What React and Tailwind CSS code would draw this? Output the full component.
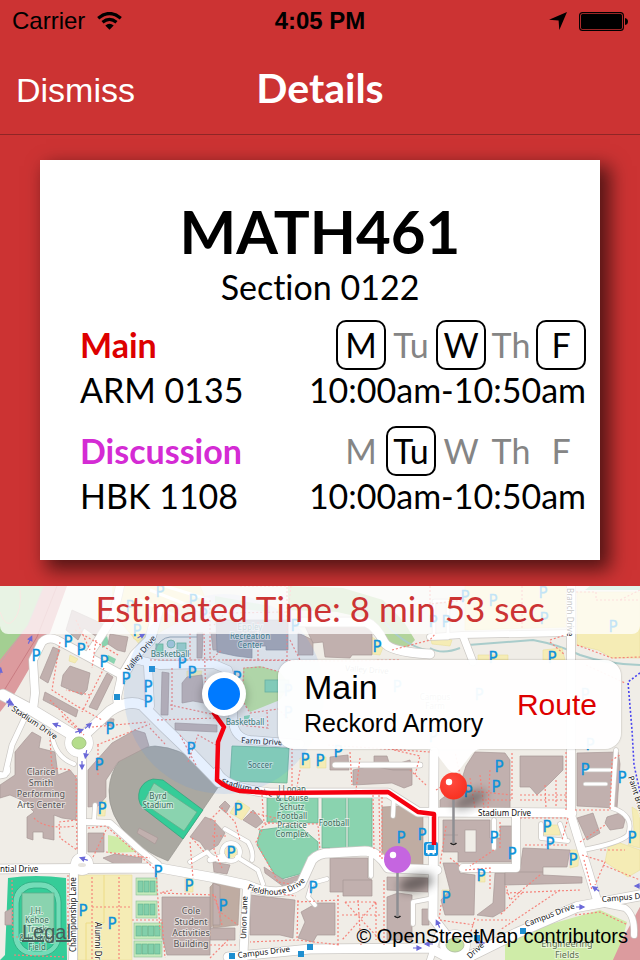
import React from "react";

const buildings = [
  "70,666 90,673 87,690 82,695 61,686 63,675",
  "53,647 60,650 48,683 40,678",
  "107,673 113,677 97,710 89,707",
  "45,692 78,710 76,717 43,700",
  "110,634 128,637 125,652 117,650 108,644",
  "72,610 103,624 97,637 84,628 78,640 66,630",
  "15,752 25,740 32,732 41,737 39,748 55,752 58,775 70,770 78,780 76,820 62,818 54,815 54,840 43,838 43,832 33,832 33,840 27,838 27,817 34,812 22,800 10,795 0,798 0,785 15,775",
  "162,672 169,673 168,715 161,715",
  "187,677 202,675 204,703 193,701 182,703 182,683",
  "175,723 217,725 217,732 175,730",
  "197,633 203,633 202,658 197,658",
  "211,633 222,633 222,650 213,650",
  "105,718 114,719 113,727 105,724",
  "298,633 313,640 313,655 298,655",
  "303,622 372,625 372,655 352,655 350,658 325,657 323,642 313,643",
  "88,770 112,743 135,730 145,733 149,746 118,762 106,780 106,797 98,806 88,807",
  "330,757 348,755 349,770 330,770",
  "374,756 387,756 390,766 410,760 412,770 374,770",
  "353,770 371,766 393,770 412,770 412,785 404,788 392,783 353,785",
  "330,858 368,858 368,878 372,880 372,896 343,896 343,892 330,892",
  "250,895 295,900 293,938 280,935 250,935",
  "317,903 335,903 335,935 317,935 313,942 298,938 305,922 301,912",
  "210,928 235,928 235,940 210,940",
  "387,897 398,893 412,895 412,940 387,940",
  "387,877 428,878 428,892 387,890",
  "190,837 205,817 213,820 225,833 218,845 207,852 200,842",
  "243,820 253,810 263,822 256,828",
  "219,807 225,801 230,806 226,813",
  "213,862 230,865 227,874 214,872",
  "264,867 284,880 303,874 307,878 284,887 265,873",
  "162,897 210,897 210,955 167,955 162,937",
  "88,833 104,833 104,852 88,852",
  "103,858 115,854 142,858 141,866 115,864",
  "213,883 220,886 220,925 213,925",
  "139,828 158,838 155,844 137,833",
  "443,820 490,820 490,838 500,838 500,826 514,826 514,862 458,862 458,852 443,852",
  "443,863 458,863 460,873 475,875 474,915 445,915 441,900 450,890",
  "495,873 505,873 505,910 493,917 477,915 493,903",
  "523,848 570,850 567,867 543,867 543,875 582,877 582,883 505,885 505,872 520,870",
  "577,818 593,813 600,833 587,840",
  "607,817 620,813 625,820 623,828 610,830 605,823",
  "520,756 563,756 563,770 550,783 537,795 530,787 520,787",
  "577,753 618,752 620,764 617,808 577,806",
  "475,752 505,753 510,760 510,808 440,808 440,800 460,785 466,766",
  "422,909 429,909 429,925 422,925",
  "5,912 12,908 12,925 5,925",
];

const sandLots = [
  "382,807 400,806 423,817 423,865 400,863 382,858",
  "213,883 240,885 238,925 213,928",
  "210,887 214,883 214,925 210,928",
];

const parking = [
  "113,586 200,586 208,605 160,632 140,645 112,612",
  "465,586 567,586 567,627 465,630",
  "577,592 640,592 640,658 612,658 598,650 577,645",
  "78,875 132,875 132,960 78,960",
  "238,800 250,808 242,820 230,813",
  "98,801 106,801 105,816 98,816",
  "185,878 193,878 193,892 185,892",
  "70,655 78,659 75,663 69,661",
  "187,671 202,671 200,678 187,677",
  "372,637 384,645 380,655 372,654",
  "492,782 504,782 504,793 492,793",
  "543,825 560,825 560,835 543,835",
  "442,890 451,890 451,905 442,905",
  "570,850 579,850 578,866 570,868",
  "632,807 640,812 640,848 628,845 634,830",
  "608,847 620,843 640,850 640,870 628,877 605,862",
  "478,655 508,655 508,660 478,660",
  "543,650 562,648 565,660 543,660",
  "430,636 452,640 450,646 432,644",
  "300,758 310,758 310,768 300,768",
  "317,757 326,757 326,768 317,768",
  "479,875 485,872 485,882 479,882",
  "137,630 146,634 138,641 133,638",
];

const roads = [
  ["M33,710 L35,693 L33,660 L42,642 Q48,636 57,640 L122,675 L117,697 L118,706", 8],
  ["M90,653 L113,617 L120,586", 8],
  ["M122,677 L135,655 L150,640 L158,610", 10],
  ["M138,660 L160,665 L214,664 L228,670 L234,690 L233,722 Q235,738 250,740 L300,744", 8],
  ["M148,665 L150,706", 8],
  ["M3,695 L35,712 L78,738", 11],
  ["M84,735 L110,711 Q128,699 142,705 L165,728 L190,752 L219,782", 10],
  ["M82,750 L82,863", 8],
  ["M74,866 L73,962", 8],
  ["M52,735 Q55,757 74,764", 4],
  ["M27,713 L12,745 L5,775 L0,776", 5],
  ["M0,869 L160,868 L210,877 L247,885 Q280,899 301,884 L312,860 Q318,853 330,853 L365,851 Q378,851 388,868 L437,870", 9],
  ["M247,886 L243,962", 8],
  ["M228,957 L310,949 L430,948 L452,960", 9],
  ["M450,966 L517,933 L577,907 L642,895", 10],
  ["M434,752 L433,918 L450,940", 9],
  ["M217,772 Q225,788 270,793 L388,793 L418,812 L572,813", 9],
  ["M516,813 L516,868 L463,868", 8],
  ["M571,586 L571,815 L597,900", 8],
  ["M616,750 L612,808 Q635,815 628,835 Q620,843 583,850", 4],
  ["M300,622 L366,622 Q376,626 384,642 Q389,652 430,654", 9],
  ["M430,637 L462,635 L571,633", 6],
  ["M463,636 L473,662", 7],
  ["M434,601 L434,638 L448,638 L448,601 Z", 3],
  ["M87,822 L110,823 L140,850 L158,864", 6],
  ["M95,805 L94,822", 4],
  ["M210,860 L223,856", 5],
  ["M237,857 L258,870 L263,884", 4],
  ["M225,829 L248,842 Q254,852 252,860", 4],
  ["M394,795 L393,816", 4],
  ["M371,853 L371,876", 4],
  ["M327,879 L312,883 L308,897 L315,905", 4],
  ["M434,898 L413,902 L413,924", 4],
  ["M494,820 L494,848", 4],
  ["M541,824 L541,838 L568,841", 4],
  ["M560,824 L565,838", 4],
  ["M600,903 L625,908 Q635,915 634,935", 6],
  ["M190,862 L207,852 Q215,862 225,860", 4],
  ["M585,770 L612,770 M585,784 L606,784", 3],
  ["M335,765 L420,765", 5],
  ["M0,774 Q10,776 8,768", 4],
  ["M430,960 L438,935", 6],
];

const footpaths = [
  "M76,620 L90,650 M75,630 L118,655 M96,640 L92,668",
  "M60,642 L52,690 L75,705 L102,720 M50,700 L80,730 M90,695 L66,690",
  "M104,668 L82,712 M62,716 L84,735",
  "M92,727 L148,722 M97,745 L150,724 M150,728 L165,744 M98,745 L98,775",
  "M50,740 L52,768 L72,770 M150,660 L215,660 L290,660",
  "M172,668 L172,712 M157,720 L216,718 M170,705 L216,715 M188,762 L198,735 L216,745 M180,735 L196,765",
  "M204,633 L206,705 M190,633 L190,660 M210,600 L210,660 L222,650",
  "M240,586 L287,586 L287,660 M225,660 L350,661 L400,660 M258,622 L258,660 M290,640 L300,660",
  "M291,586 L288,612 L225,613 L214,625",
  "M392,650 L430,640 L436,633 M430,586 L430,604 L465,600 M522,586 L522,630",
  "M576,592 L596,592 L596,600 L640,600 M577,645 L612,658 L640,657 M550,640 L565,635 M550,642 L565,655",
  "M280,672 L262,667 L244,668 L242,700 L250,713 L278,709 L290,720 M267,712 L268,728 L240,725",
  "M292,748 L292,795 M300,770 L296,792 M350,752 L352,785 M328,745 L430,752",
  "M360,758 L356,790 M394,750 L420,756 L415,775 M410,770 L426,785 M382,797 L382,860",
  "M88,828 L106,826 L156,870 L160,930 M93,857 L106,830 M106,852 L150,858",
  "M34,818 Q45,830 76,826 M76,775 L77,850 L60,838 L59,822 L76,820",
  "M68,875 L68,945 M92,877 L92,960 M119,877 L119,960 M92,907 L132,907 M132,920 L162,920 L165,958",
  "M12,880 L13,937 L25,937 M14,955 L66,957",
  "M160,893 L215,895 L222,925 M190,842 L193,878 M192,838 L205,853 M172,890 L160,893",
  "M210,820 L222,808 L235,822 L240,840 M212,836 L228,836 M215,820 L214,850 L222,868 M250,812 L275,818 L258,830",
  "M262,795 L264,823 L318,824 L320,850 M262,830 L256,842 L278,882 L290,884",
  "M213,895 L220,912 L238,925 M210,945 L238,945 M210,958 L228,940",
  "M298,900 L297,940 L340,945 M297,902 L340,900 M252,890 L296,896 M295,940 L250,942",
  "M338,895 L338,945 M345,902 L376,902 L376,940 M342,915 L380,915 M345,902 L380,940 M376,902 L342,940 M358,900 L361,945 M384,880 L384,945",
  "M373,795 L374,850 M379,795 L380,858",
  "M436,790 L460,775 L455,752 M455,795 L465,778 M470,778 L475,808 M480,775 L484,808 M490,770 L488,808 M462,790 L512,795",
  "M485,800 L512,800 L512,752 M520,795 L568,795 M520,800 L568,800 M545,785 L546,808 M556,780 L556,808 M566,752 L566,810",
  "M575,810 L610,810 L612,760 L620,755 M580,842 L605,825 M600,850 L625,850",
  "M520,818 L568,818 L562,840 M500,822 L500,850 M525,845 L568,845 M494,850 L470,866",
  "M506,893 L580,890 M540,875 L510,900 L506,886 M522,893 L500,915 M560,890 L500,930 M477,920 L510,920 M441,905 L439,920 L475,925 M475,918 L470,935",
  "M582,855 L605,862 L595,885 M603,865 L640,880 M584,860 L592,890 M575,915 L600,912 L628,925",
  "M446,826 L440,865 M450,858 L460,866 M465,870 L490,868 L490,890",
  "M640,590 L620,600 M586,665 L625,683",
];

const spots = [
  [68, 642], [81, 650], [36, 656], [104, 662], [126, 679], [148, 687], [148, 702], [182, 663], [192, 673],
  [110, 729], [191, 749], [99, 765], [160, 592], [193, 601], [137, 631], [130, 607], [203, 615], [295, 626],
  [377, 647], [237, 678], [305, 760], [320, 761], [338, 752], [288, 691], [397, 687], [288, 713], [465, 597],
  [493, 601], [543, 593], [544, 619], [613, 627], [433, 622], [446, 622], [493, 658], [552, 658], [499, 767],
  [585, 770], [479, 695], [585, 695], [590, 745], [433, 737], [102, 809], [158, 872], [189, 886], [83, 911],
  [112, 924], [238, 810], [231, 853], [223, 906], [313, 888], [401, 838], [422, 835], [468, 792], [496, 787],
  [494, 838], [512, 854], [481, 876], [446, 898], [547, 827], [550, 844], [573, 860], [632, 838], [622, 778],
];

const stops = [[117, 697], [152, 669], [310, 947], [301, 954], [232, 956], [523, 931], [477, 938]];

const arrows = [
  [30, 640, -65], [9, 703, -80], [0, 672, -80], [10, 703, 30], [57, 725, 200], [79, 731, -20], [88, 726, -40],
  [86, 754, 100], [84, 859, 200], [82, 765, 90], [580, 907, 0], [596, 889, 215], [639, 886, 180], [438, 924, -115],
  [429, 944, 180], [480, 943, 0], [417, 948, 0], [141, 636, -30],
];

const areaLabels = [
  [41, 775, 9, "#555", ["Clarice", "Smith", "Performing", "Arts Center"]],
  [158, 799, 8, "#3d6b5c", ["Byrd", "Stadium"]],
  [191, 914, 9, "#555", ["Cole", "Student", "Activities", "Building"]],
  [37, 914, 8, "#3d7560", ["J.H.", "Kehoe", "Track", "& Ludwig", "Field"]],
  [292, 792, 8, "#3d6b5c", ["J Logan", "& Louise", "Schutz", "Football", "Practice", "Complex"]],
  [334, 826, 8, "#3d6b5c", ["Football"]],
  [260, 768, 8, "#3d6b5c", ["Soccer"]],
  [245, 725, 8, "#3d7560", ["Basketball"]],
  [170, 657, 8, "#3d7560", ["Basketball"]],
  [250, 630, 8, "#3d7575", ["Eppley", "Recreation", "Center"]],
  [567, 947, 9, "#5e7252", ["Engineering", "Fields"]],
  [435, 700, 8, "#777", ["Campus", "Farm"]],
];

const roadLabels = [
  ["Stadium Drive", 11, 710, 34],
  ["Valley Drive", 129, 672, -51],
  ["Farm Drive", 241, 743, 3],
  ["Stadium Drive", 478, 816, 0],
  ["Stadium Drive", 221, 784, 14],
  ["ntial Drive", 0, 872, 0],
  ["Union Lane", 246, 939, -88],
  ["Championship Lane", 76, 952, -90],
  ["Alumni Drive", 95, 922, 90],
  ["Branch Drive", 567, 588, 90],
  ["Paint Branch", 628, 777, 72],
  ["Campus Drive", 238, 958, -7],
  ["Campus Drive", 526, 927, -21],
  ["Campus Dr", 602, 902, -5],
  ["Drive", 470, 959, -42],
  ["Valley Drive", 345, 671, 4],
];

const courts = [
  [136, 878, 21, 17, 3], [136, 901, 21, 17, 3], [134, 923, 28, 16, 4], [134, 941, 28, 16, 4],
];

function CampusMap() {
  return (
    <svg
      className="absolute inset-0 h-full w-full font-['Noto_Sans',sans-serif]"
      viewBox="0 586 640 374"
      preserveAspectRatio="xMidYMin slice"
      role="img"
      aria-label="Campus map with walking route"
    >
      <defs>
        <filter id="soft" x="-50%" y="-50%" width="200%" height="200%">
          <feGaussianBlur stdDeviation="5" />
        </filter>
        <radialGradient id="redPin" cx="0.4" cy="0.35" r="0.7">
          <stop offset="0" stopColor="#ff4a40" />
          <stop offset="1" stopColor="#f8301f" />
        </radialGradient>
        <path id="fieldhouse" d="M247,889 Q280,904 306,881" />
      </defs>
      <rect x="0" y="586" width="640" height="374" fill="#f0ede7" />

      {/* Parkland, highway and open ground */}
      <polygon points="0,586 48,586 30,625 0,668" fill="#a3cf92" />
      <path d="M0,612 Q6,630 14,620 T20,590" fill="none" stroke="#e9a08f" />
      <polygon points="44,586 67,586 50,633 15,693 0,712 0,660 28,625" fill="#dc9b9e" />
      <path d="M57,586 L37,637 L0,697" fill="none" stroke="#c97c82" />
      <path d="M44,586 L28,625 L0,663" fill="none" stroke="#bfaaa8" />
      <polygon points="288,586 343,588 383,600 404,622 415,640 408,647 397,648 386,640 373,620 337,612 288,610" fill="#b2d49b" />
      <path d="M215,596 L270,606 L270,612 L215,606Z" fill="#cfe5bd" />
      <path d="M380,616 Q400,645 430,651 M430,648 Q442,655 460,648 M468,645 L533,640 Q560,645 580,655 Q606,664 640,665" fill="none" stroke="#a9cccb" strokeWidth="2" />
      <path d="M590,586 L640,586 L640,590 L585,590Z" fill="#8ad3af" />
      <polygon points="505,941 530,930 600,910 627,922 617,960 505,960" fill="#cfeca8" />
      <polygon points="642,903 622,940 612,962 642,962" fill="#dc9b9e" />
      <polygon points="108,835 118,837 137,852 108,853" fill="#cfeca8" />

      {parking.map((p) => (
        <polygon key={p} points={p} fill="#f5ecb5" stroke="#eadf9a" strokeWidth="0.6" />
      ))}
      <path d="M104,875 V923 H86 V960" fill="none" stroke="#eddc86" />
      <path d="M150,590 L205,612 M140,600 L190,622 M165,586 L210,600" stroke="#fff" strokeWidth="3" />

      {/* Stadium bowl and sports fields */}
      <path d="M120,760 Q135,747 155,746 Q182,748 200,765 L219,786 L168,861 Q145,852 130,838 Q108,815 109,790 Q110,772 120,760Z" fill="#aaa8a1" stroke="#918f8a" strokeWidth="0.6" />
      <path d="M153,779 L163,780 L203,810 L183,839 L143,808 Q136,800 140,789 Q144,781 153,779Z" fill="#35cc98" stroke="#249c74" strokeWidth="0.6" />
      <polygon points="154,783 197,812 184,831 143,803" fill="#8ad3af" stroke="#5fae8c" strokeWidth="0.8" />
      <path d="M8,878 Q35,874 66,878 L67,960 L0,960 L5,955Z" fill="#35cc98" />
      <rect x="13" y="882" width="48" height="74" rx="20" fill="#74dcb8" stroke="#2faa80" strokeWidth="0.8" />
      <rect x="19" y="888" width="37" height="63" rx="15" fill="#35cc98" stroke="#2faa80" strokeWidth="0.8" />
      <rect x="22" y="893" width="32" height="48" fill="#8ad3af" stroke="#5fae8c" strokeWidth="0.8" />
      {courts.map(([x, y, w, h, n]) => (
        <g key={y}>
          <rect x={x} y={y} width={w} height={h} fill="#c5eabb" stroke="#8abf94" strokeWidth="0.6" />
          {Array.from({ length: n }, (_, i) => (
            <rect key={i} x={x + 2 + (i * (w - 3)) / n} y={y + 3} width={(w - 3) / n - 1} height={h - 6} fill="#82cfaa" stroke="#5fae8c" strokeWidth="0.6" />
          ))}
        </g>
      ))}
      <g fill="#8ad3af" stroke="#6db394" strokeWidth="0.8">
        <polygon points="232,746 289,748 287,783 230,781" />
        <polygon points="267,798 318,798 318,823 267,822" />
        <polygon points="322,797 346,797 346,848 322,848" />
        <polygon points="348,797 372,797 372,848 348,848" />
        <path d="M260,830 L298,825 L318,842 L318,853 L307,872 L278,880 L257,845Z" />
        <path d="M243,668 L260,666 L280,672 L290,685 L280,700 L250,712 L242,700Z" fill="#bfe09b" stroke="none" />
        <rect x="265" y="680" width="24" height="12" />
        <rect x="156" y="644" width="7" height="9" />
        <rect x="177" y="643" width="9" height="8" fill="#9fcfc4" />
        <circle cx="171" cy="644" r="4" fill="#a9c8d4" />
        <path d="M102,640 l5,-4 l2,8 l-7,4z M108,655 l8,4 l-2,5 l-7,-4z M244,716 l6,-1 l-1,4 l-5,1z" stroke="none" />
      </g>
      <path d="M155,656 V650 Q160,638 170,637 H197" fill="none" stroke="#9aa5ad" />

      {sandLots.map((p) => (
        <polygon key={p} points={p} fill="#bfaca2" stroke="#a8968e" strokeWidth="0.6" />
      ))}
      {buildings.map((p) => (
        <polygon key={p} points={p} fill="#c1b0ae" stroke="#a79896" strokeWidth="0.7" />
      ))}
      <polygon points="216,620 288,620 288,650 266,650 266,646 252,646 252,658 236,656 217,652" fill="#a8a5ac" stroke="#8f8f9a" strokeWidth="0.7" />
      <rect x="465" y="830" width="11" height="22" fill="#f0ede7" stroke="#a79896" strokeWidth="0.6" />
      <path d="M343,880 H372 M343,880 V892 M505,872 H543 M443,835 H458" stroke="#a79896" strokeWidth="0.7" />

      {/* Streets: casing below, surface above */}
      <g fill="none" strokeLinejoin="round" strokeLinecap="round">
        {roads.map(([d, w]) => (
          <path key={d} d={d} stroke="#cbc8c4" strokeWidth={w + 1.4} />
        ))}
        <circle cx="79" cy="743" r="10" stroke="#cbc8c4" strokeWidth="9" />
        <circle cx="455" cy="945" r="11" stroke="#cbc8c4" strokeWidth="9" />
        <circle cx="82" cy="864" r="7" stroke="#cbc8c4" strokeWidth="9" />
        <circle cx="231" cy="852" r="9" stroke="#cbc8c4" strokeWidth="5" />
        {roads.map(([d, w]) => (
          <path key={d} d={d} stroke="#fff" strokeWidth={w} />
        ))}
        <circle cx="79" cy="743" r="10" stroke="#fff" strokeWidth="8" />
        <circle cx="455" cy="945" r="11" stroke="#fff" strokeWidth="8" />
        <circle cx="82" cy="864" r="7" stroke="#fff" strokeWidth="8" />
        <circle cx="231" cy="852" r="9" stroke="#fff" strokeWidth="4" />
      </g>
      <ellipse cx="79" cy="743" rx="7" ry="6" fill="#b5dd8c" stroke="#a5c585" />
      <ellipse cx="455" cy="945" rx="9" ry="7" fill="#c5e3a0" stroke="#b5c5a5" />
      <ellipse cx="82" cy="865" rx="4" ry="2" fill="#e8e5df" />
      <circle cx="231" cy="852" r="6" fill="#f5ecb5" />

      <g fill="none" stroke="#f5837b" strokeWidth="1.2" strokeDasharray="2 2">
        {footpaths.map((d) => (
          <path key={d} d={d} />
        ))}
      </g>
      <path d="M640,673 L628,682 L632,730 L634,765 L640,792" fill="none" stroke="#4a45f0" strokeWidth="1.6" strokeDasharray="2 2" />

      {arrows.map(([x, y, a], i) => (
        <path key={i} transform={`translate(${x} ${y}) rotate(${a})`} d="M-4,0 H1 M0,-2 L4,0 L0,2Z" fill="#6a68d8" stroke="#6a68d8" strokeWidth="1.2" />
      ))}
      {stops.map(([x, y]) => (
        <rect key={x} x={x - 3} y={y - 3} width="6" height="6" fill="#1f8fd0" />
      ))}

      <g className="font-['DejaVu_Sans',sans-serif] text-[15px]" fill="#0d92da" stroke="#0d92da" strokeWidth="0.3" textAnchor="middle">
        {spots.map(([x, y]) => (
          <text key={`${x}-${y}`} x={x} y={y + 5}>P</text>
        ))}
      </g>

      {areaLabels.map(([x, y, size, color, lines], k) => (
        <g
          key={k}
          fill={color}
          stroke="#ffffff"
          strokeOpacity="0.5"
          strokeWidth="2"
          textAnchor="middle"
          className={size === 9 ? "text-[9px] [paint-order:stroke]" : "text-[8px] [paint-order:stroke]"}
        >
          {lines.map((t, i) => (
            <text key={t} x={x} y={y + i * (size === 9 ? 11 : 9)}>{t}</text>
          ))}
        </g>
      ))}
      <g className="text-[8px] [paint-order:stroke]" fill="#111" stroke="#fff" strokeWidth="1.5" strokeOpacity="0.8">
        {roadLabels.map(([t, x, y, a]) => (
          <text key={`${t}${x}`} transform={`translate(${x} ${y}) rotate(${a})`}>{t}</text>
        ))}
        <text>
          <textPath href="#fieldhouse">Fieldhouse Drive</textPath>
        </text>
      </g>

      {/* Bus stop */}
      <rect x="424" y="842" width="14" height="14" rx="2" fill="#1493dc" />
      <rect x="427" y="844" width="8" height="7" rx="1.5" fill="#1493dc" stroke="#fff" strokeWidth="1.2" />
      <path d="M426,850 h10 v3 h-1.5 v1.5 h-2 v-1.500 h-3 v1.500 h-2 v-1.500 h-1.500z" fill="#fff" />

      {/* Location accuracy, route and current position */}
      <circle cx="224" cy="694" r="100" fill="#4d94f5" fillOpacity="0.14" />
      <path d="M213,712 L224,727 L218,742 L217,780 Q226,788 240,791 L270,793 L388,792 L418,812 L434,814 L434,845" fill="none" stroke="#f5000f" strokeWidth="4.500" strokeLinejoin="round" />
      <circle cx="224" cy="696" r="23" fill="#000" fillOpacity="0.25" filter="url(#soft)" />
      <circle cx="224" cy="694" r="22" fill="#fff" />
      <circle cx="224" cy="694" r="16" fill="#007aff" />

      {/* Pins */}
      <ellipse cx="470" cy="800" rx="18" ry="7" fill="#000" fillOpacity="0.35" filter="url(#soft)" transform="rotate(-25 470 800)" />
      <ellipse cx="416" cy="883" rx="18" ry="8" fill="#000" fillOpacity="0.45" filter="url(#soft)" transform="rotate(-15 416 883)" />
      <path d="M450.500,843 q3,3 6,0 M394.500,916 q3,3 6,0" fill="none" stroke="#222" strokeWidth="1.500" />
      <path d="M453.500,798 V843 M397.500,870 V916" stroke="#8e8e93" strokeWidth="2.500" />
      <circle cx="453.500" cy="786" r="13.500" fill="url(#redPin)" />
      <circle cx="449" cy="782" r="3.200" fill="#fff" />
      <circle cx="397.500" cy="859.500" r="13.500" fill="#c565e0" />
      <circle cx="393" cy="855" r="3.200" fill="#fff" />
    </svg>
  );
}

function Day({ label, active }) {
  return (
    <li
      className={
        active
          ? "flex size-[50px] items-center justify-center rounded-[10px] border-2 border-black text-black"
          : "flex size-[50px] items-center justify-center text-[#858585]"
      }
    >
      {label}
    </li>
  );
}

function Meeting({ title, titleClass, room, time, active }) {
  return (
    <section className="text-[34px] leading-[40px]">
      <div className="flex items-center justify-between">
        <h3 className={titleClass}>{title}</h3>
        <ul className="flex">
          {["M", "Tu", "W", "Th", "F"].map((d) => (
            <Day key={d} label={d} active={active.includes(d)} />
          ))}
        </ul>
      </div>
      <div className="flex justify-between">
        <p>{room}</p>
        <p>{time}</p>
      </div>
    </section>
  );
}

export default function App() {
  return (
    <div className="flex min-h-screen flex-col overflow-hidden bg-[#cc3333] font-[Lato,sans-serif] text-black [font-variant-ligatures:none]">
      <div className="grid h-[42px] grid-cols-3 items-center px-3 font-['Liberation_Sans',sans-serif] text-2xl">
        <div className="flex items-center gap-3">
          <span>Carrier</span>
          <svg className="h-[18px] w-[25px]" viewBox="0 0 25 18" fill="none" stroke="#000" strokeWidth="3.200" aria-label="Wi-Fi">
            <path d="M1.200,6.200 Q12.500,-3.200 23.800,6.200" />
            <path d="M5.500,10.300 Q12.500,4.400 19.500,10.300" />
            <path d="M8.300,13.500 Q12.500,10 16.700,13.500 L12.500,17.700Z" fill="#000" stroke="none" />
          </svg>
        </div>
        <time className="text-center font-bold">4:05 PM</time>
        <div className="flex items-center justify-end gap-3">
          <svg className="size-[18px]" viewBox="0 0 18 18" aria-label="Location in use">
            <path d="M18,0 L0,7.700 L9.600,8.400 L10.300,18Z" />
          </svg>
          <svg className="h-[19px] w-[49px]" viewBox="0 0 49 19" aria-label="Battery full">
            <rect x="0.600" y="0.600" width="43.800" height="17.800" rx="3" fill="none" stroke="#000" strokeWidth="1.100" />
            <rect x="2" y="2" width="41" height="15" rx="1.500" />
            <path d="M46,6 q3,0.500 3,3.500 t-3,3.500z" />
          </svg>
        </div>
      </div>

      <header className="grid h-[93px] grid-cols-3 items-center border-b border-[#8f2626] px-4 pt-1 text-white">
        <button type="button" className="justify-self-start font-['Liberation_Sans',sans-serif] text-[34px] leading-10">
          Dismiss
        </button>
        <h1 className="pb-1 text-center text-[41px] leading-10 font-bold">Details</h1>
      </header>

      <main className="flex grow flex-col">
        <article className="mx-10 mt-[25px] mb-[26px] bg-white pt-[38px] pr-[14px] pb-11 pl-10 shadow-[8px_8px_18px_2px_rgba(0,0,0,0.6)]">
          <div className="-mr-[14px] -ml-10 text-center">
            <h2 className="text-[60px] leading-[66px] font-bold">MATH461</h2>
            <p className="text-[34px] leading-[46px]">Section 0122</p>
          </div>
          <div className="mt-[10px] flex flex-col gap-4">
            <Meeting title="Main" titleClass="font-bold text-[#dd0000]" room="ARM 0135" time="10:00am-10:50am" active={["M", "W", "F"]} />
            <Meeting title="Discussion" titleClass="font-bold text-[#d42bd4]" room="HBK 1108" time="10:00am-10:50am" active={["Tu"]} />
          </div>
        </article>

        <section className="relative min-h-[374px] grow overflow-hidden">
          <CampusMap />
          <p className="relative rounded-b-lg bg-white/75 pb-1 text-center text-[35px] leading-[44px] text-[#cc3333]">
            Estimated Time: 8 min 53 sec
          </p>

          <div className="absolute top-[74px] left-1/2 -ml-[42px] flex h-[89px] w-[343px] items-center justify-between rounded-[16px] bg-white/95 pr-6 pl-[26px] font-['Liberation_Sans',sans-serif] shadow-[0_0_2px_rgba(0,0,0,0.3)]">
            <div className="pb-1">
              <p className="text-[34px] leading-10">Main</p>
              <p className="text-[25px] leading-8">Reckord Armory</p>
            </div>
            <button type="button" className="text-[30px] leading-10 text-[#dd0000]">
              Route
            </button>
            <svg className="absolute top-full left-[150px] h-6 w-[52px]" viewBox="0 0 52 24" fill="#fff" fillOpacity="0.95">
              <path d="M0,0 H52 Q46,1 42,7 L32,20 Q26,27 20,20 L10,7 Q6,1 0,0Z" />
            </svg>
          </div>

          <footer className="absolute inset-x-0 bottom-3 flex items-end justify-between pr-3 pl-[22px] font-['Liberation_Sans',sans-serif]">
            <a href="#legal" className="text-xl leading-8 text-[#45605a] underline">Legal</a>
            <p className="text-xl leading-6">© OpenStreetMap contributors</p>
          </footer>
        </section>
      </main>
    </div>
  );
}
